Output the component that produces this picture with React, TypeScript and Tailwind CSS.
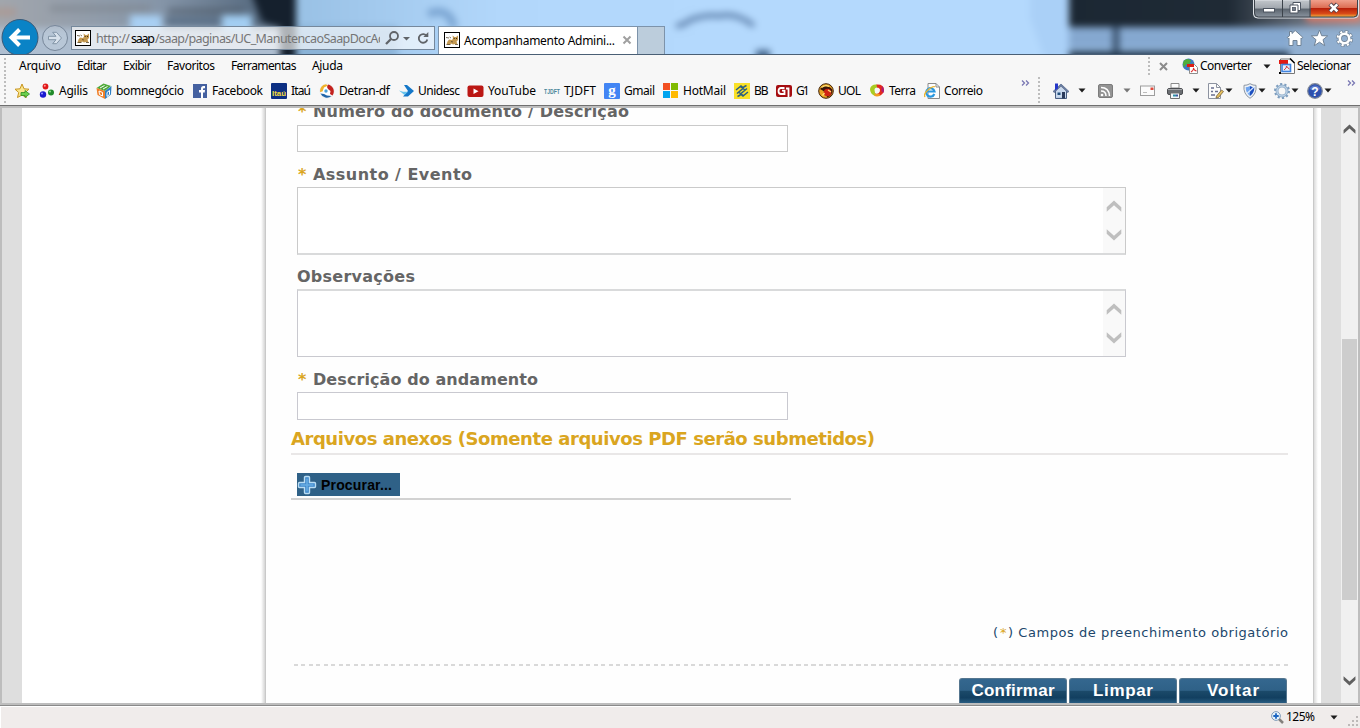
import { useLayoutEffect, useRef, useState, type ReactNode } from 'react';

const UI = "font-['Noto_Sans','Open_Sans',sans-serif]";
const VERDANA = "font-['DejaVu_Sans',Verdana,sans-serif]";

/* Text line whose tracking is adjusted so that it fills the given width. */
function Fit({ w, text, className = '' }: { w: number; text: string; className?: string }) {
  const ref = useRef<HTMLSpanElement>(null);
  const [spacing, setSpacing] = useState(0);
  useLayoutEffect(() => {
    const el = ref.current;
    if (el) setSpacing((w - el.getBoundingClientRect().width) / Math.max(1, text.length - 1));
  }, [w, text]);
  return (
    <span className={`block shrink-0 whitespace-pre ${className}`} style={{ width: w }}>
      <span ref={ref} className="inline-block" style={{ letterSpacing: spacing }}>
        {text}
      </span>
    </span>
  );
}

function Svg({ w = 16, h = 16, className = '', children }: { w?: number; h?: number; className?: string; children: ReactNode }) {
  return (
    <svg width={w} height={h} viewBox={`0 0 ${w} ${h}`} className={`block shrink-0 ${className}`}>
      {children}
    </svg>
  );
}

function Caret({ className = '', color = '#1c1c1c' }: { className?: string; color?: string }) {
  return (
    <Svg w={8} h={5} className={className}>
      <path d="M0.5 0.5h7L4 4.5z" fill={color} />
    </Svg>
  );
}

function Chevrons({ className = '' }: { className?: string }) {
  return (
    <Svg w={9} h={6} className={className}>
      <path d="M1 .5l2.500 2.500L1 5.500M5 .5l2.500 2.500L5 5.500" fill="none" stroke="#7a78b4" strokeWidth="1.300" />
    </Svg>
  );
}

function Grip({ h, className = '' }: { h: number; className?: string }) {
  return (
    <Svg w={2} h={h} className={className}>
      <path d={`M1 0V${h}`} stroke="#bdbdbd" strokeWidth="2" strokeDasharray="2 2" />
    </Svg>
  );
}

function CatIcon({ className = '' }: { className?: string }) {
  return (
    <Svg className={className}>
      <rect x=".5" y=".5" width="15" height="15" fill="#fff" stroke="#000" />
      <path d="M2.500 12.500l1-3L5 7.500l3 .5 1-1.500-.5-3L10.500 5h1.500l2-1.500v4.500l-1.500 1.500 1 3-2.500-.5-2 .5-2-1-1.500 1.500z" fill="#c59a52" />
      <path d="M2 5.500l3 .5M5.500 5l1.500 1M2.500 12.500h4M11 12.500h3M7 9.500l2 .5" stroke="#5b4a2e" strokeWidth=".8" />
      <path d="M9.700 6.500h1M12 6.500h1" stroke="#3c2c14" />
    </Svg>
  );
}

function GlassBackdrop() {
  return (
    <svg className="absolute -left-5 -top-5 max-w-none blur-[3.5px]" width="1400" height="94" viewBox="-20 -20 1400 94">
      <defs>
        <linearGradient id="gl"><stop offset="0" stopColor="#a5a8ad" /><stop offset=".6" stopColor="#8595a8" /><stop offset="1" stopColor="#4b6076" /></linearGradient>
        <linearGradient id="gd"><stop offset="0" stopColor="#1b2733" /><stop offset=".5" stopColor="#1f2a35" /><stop offset=".75" stopColor="#6c7480" /><stop offset="1" stopColor="#9aa0a8" /></linearGradient>
        <linearGradient id="gb"><stop offset="0" stopColor="#98c0e4" /><stop offset=".35" stopColor="#b2d7fb" /><stop offset=".8" stopColor="#b4d9fd" /><stop offset="1" stopColor="#b4d9fd" /></linearGradient>
      </defs>
      <rect x="-20" y="-20" width="1400" height="94" fill="#b4d9fd" />
      <rect x="290" y="-20" width="600" height="94" fill="url(#gb)" />
      <rect x="-20" y="-20" width="302" height="94" fill="url(#gl)" />
      <rect x="-20" y="8" width="36" height="8" fill="#b58f80" opacity=".5" />
      <rect x="50" y="5" width="100" height="7" fill="#7f858d" opacity=".6" />
      <rect x="168" y="8" width="75" height="6" fill="#4c5866" opacity=".6" />
      <rect x="-20" y="28" width="310" height="46" fill="#aebed0" />
      <rect x="130" y="15" width="32" height="15" fill="#a8d0f4" />
      <rect x="222" y="15" width="30" height="15" fill="#a2cef3" />
      <rect x="166" y="17" width="54" height="9" fill="#5d7289" />
      <path d="M246 -20h50v94h-16V28l-18-6z" fill="#15202d" />
      <path d="M298 26h100v48H298z" fill="#7fa6cc" opacity=".6" />
      <path d="M428 14q22-8 26 14" stroke="#7ba5d2" strokeWidth="8" fill="none" />
      <path d="M676 26q8-1 14-6q16-6 30-4q16-4 34 10" stroke="#4f719c" strokeWidth="5" fill="none" opacity=".8" />
      <rect x="756" y="50" width="14" height="20" fill="#45668c" />
      <rect x="590" y="53" width="40" height="18" fill="#6688aa" opacity=".6" />
      <path d="M1030 -20h40v94h-20L1030 18z" fill="#9cc4ee" opacity=".4" />
      <rect x="1069" y="-20" width="320" height="47" fill="url(#gd)" />
      <rect x="1069" y="27" width="320" height="22" fill="#85a8d0" />
      <rect x="1113" y="26" width="6" height="26" fill="#344b65" />
      <rect x="1069" y="51" width="220" height="20" fill="#253a50" />
      <rect x="1289" y="28" width="100" height="46" fill="#91afd0" />
      <rect x="1306" y="-10" width="56" height="32" rx="4" fill="#f07a64" opacity=".8" />
    </svg>
  );
}

function CaptionButtons() {
  return (
    <svg width="112" height="26" viewBox="0 0 112 26" className="block">
      <defs>
        <linearGradient id="cb" x2="0" y2="1"><stop offset="0" stopColor="#c2c7cc" /><stop offset=".45" stopColor="#a1a7ae" /><stop offset=".5" stopColor="#5b646e" /><stop offset="1" stopColor="#8f99a4" /></linearGradient>
        <linearGradient id="cr" x2="0" y2="1"><stop offset="0" stopColor="#f0a08c" /><stop offset=".45" stopColor="#dd6e54" /><stop offset=".5" stopColor="#b8200a" /><stop offset=".8" stopColor="#d84a18" /><stop offset="1" stopColor="#f5b440" /></linearGradient>
      </defs>
      <g transform="translate(1.500 0)">
        <path d="M4 0v14q0 4 4 4h97q4 0 4-4V0z" fill="url(#cb)" stroke="#dfe3e8" />
        <path d="M61 0h47v13q0 4-4 4H61z" fill="url(#cr)" />
        <path d="M5 0v13q0 4 4 4h95q4 0 4-4V0M33 0v17M60.500 0v17" fill="none" stroke="#3c434b" />
        <rect x="14" y="8.500" width="11" height="3.500" fill="#fff" stroke="#4d5561" />
        <path d="M43.500 2.500h7.500v8h-7.500z" fill="#fff" stroke="#4d5561" />
        <path d="M40.500 5h8v8h-8z" fill="#fff" stroke="#4d5561" />
        <rect x="43" y="7.500" width="3" height="3" fill="#747d89" stroke="#4d5561" strokeWidth=".8" />
        <path d="M80.500 4l7.500 7.500M88 4l-7.500 7.500" stroke="#53414a" strokeWidth="4.500" />
        <path d="M80.800 4.300l7 7M87.800 4.300l-7 7" stroke="#fff" strokeWidth="2.600" />
      </g>
    </svg>
  );
}

function TitleBar() {
  return (
    <header className="relative h-[54px] overflow-hidden">
      <GlassBackdrop />
      <div className="relative flex h-[54px]">
        <Svg w={71} h={54}>
          <circle cx="20" cy="37.500" r="18" fill="#0a83c6" stroke="#3a5a78" />
          <path d="M30 37.500H12M19.500 29.500l-8 8 8 8" fill="none" stroke="#fff" strokeWidth="4" />
          <circle cx="55" cy="38" r="12.500" fill="#c2cfdd" fillOpacity=".5" stroke="#77879a" />
          <path d="M48.500 36.300h7.500l-3.300-4h3.800l5 5.700-5 5.700h-3.800l3.300-4h-7.500z" fill="#d8e2ec" stroke="#7c8ea2" strokeWidth=".9" />
        </Svg>
        <div className="mt-[26px] flex h-6 w-[364px] items-center border border-[#75889c] bg-white/65 pl-[3px]">
          <CatIcon />
          <div className={`ml-[5px] flex w-[284px] overflow-hidden pt-px text-[12.5px] leading-[22px] text-[#757575] ${UI}`}>
            <Fit w={34} text="http://" />
            <Fit w={24} text="saap" className="ml-px text-black" />
            <Fit w={229} text="/saap/paginas/UC_ManutencaoSaapDocAc" />
          </div>
          <Svg w={53} h={20}>
            <g transform="translate(4 0)">
              <circle cx="10" cy="8" r="4" fill="none" stroke="#606469" strokeWidth="1.800" />
              <path d="M7 11l-5 5" stroke="#606469" strokeWidth="2.300" />
              <path d="M19 9h7l-3.500 3.500z" fill="#606469" />
              <path d="M42.800 8.200A4.300 4.300 0 1 0 43.300 11.500" fill="none" stroke="#606469" strokeWidth="1.800" />
              <path d="M44.300 4v5h-5z" fill="#606469" />
            </g>
          </Svg>
        </div>
        <div className="ml-[3px] mt-[26px] flex h-7 w-[200px] border border-b-0 border-[#7d93aa] bg-white pl-[5px] pt-[5px]">
          <CatIcon />
          <Fit w={151} text="Acompanhamento Admini..." className={`ml-1 text-xs leading-[17px] text-black ${UI}`} />
          <Svg w={10} h={16} className="ml-[7px]"><path d="M1.500 4.500l7 7M8.500 4.500l-7 7" stroke="#a0a0a0" strokeWidth="2" /></Svg>
        </div>
        <div className="mt-[26px] h-[28px] w-[27px] border border-b-0 border-l-0 border-[#7d93aa] bg-[#bccddc]" />
        <div className="ml-auto flex w-[112px] flex-col">
          <CaptionButtons />
          <Svg w={112} h={26}>
            <g transform="translate(38 2.500)" stroke="#6f8296" strokeWidth="1" fill="#fff">
              <path d="M3 9.500v7.500h4v-5h4v5h4V9.500l.8.600 1-1.300L9.200 2 6 5V3H3.500v4.300L1.200 9l1 1.100z" />
              <path d="M33.500 1.500l2.200 5.700 6 .2-4.700 3.800 1.700 6-5.200-3.500-5.200 3.500 1.700-6-4.700-3.800 6-.2z" />
              <circle cx="58.500" cy="10" r="7" fill="none" stroke="#6f8296" strokeWidth="3.200" strokeDasharray="3.500 2" />
              <circle cx="58.500" cy="10" r="4.700" fill="none" stroke="#6f8296" strokeWidth="4.200" />
              <circle cx="58.500" cy="10" r="6.900" fill="none" stroke="#fff" strokeWidth="2" strokeDasharray="2.200 3.220" strokeDashoffset="-.7" />
              <circle cx="58.500" cy="10" r="4.700" fill="none" stroke="#fff" strokeWidth="2.600" />
            </g>
          </Svg>
        </div>
      </div>
    </header>
  );
}

const StarIcon = (
  <Svg>
    <path d="M8 1l2 4.800 5 .4-3.800 3.300 1.200 5L8 12l-4.500 2.500 1.200-5L1 6.200l5-.4z" fill="#fbe68c" stroke="#c79520" />
    <path d="M7 9.500h4V7.500l4.500 3.500-4.500 3.500v-2H7z" fill="#6ccf4c" stroke="#2f8c22" strokeWidth=".8" />
  </Svg>
);
const AgilisIcon = (
  <Svg>
    <circle cx="6.500" cy="3.500" r="2.900" fill="#e01818" /><circle cx="4" cy="11.500" r="3.200" fill="#1a1ad0" /><circle cx="12" cy="9.500" r="3" fill="#208a2a" />
    <circle cx="5.800" cy="2.700" r="1" fill="#ff9a9a" /><circle cx="3" cy="10.500" r="1" fill="#9a9aff" /><circle cx="11" cy="8.500" r="1" fill="#90e090" />
  </Svg>
);
const BomIcon = (
  <Svg>
    <path d="M.5 5l7-4.500L15 3l-6 5z" fill="#4faa3a" /><path d="M.5 5L9 8v8l-7.500-4z" fill="#f0802a" /><path d="M9 8l6.500-5-.5 8.500L9 16z" fill="#2e7fc4" />
    <path d="M4 5l4.500-2.500M7 6l4.500-2.500M3 8l3.500 1.500v3.500L3.500 11.500zM11 9.500l2.500-2v4l-2.500 2z" fill="none" stroke="#fff" strokeWidth="1" />
  </Svg>
);
const FacebookIcon = (
  <Svg>
    <rect x="0" y="1" width="14" height="14" fill="#4561a0" />
    <path d="M8 15V9.500H6V7h2V5.500Q8 3 10.500 3H12v2.200h-1.200q-.8 0-.8.800v1h2l-.3 2.500H10V15z" fill="#fff" />
  </Svg>
);
const ItauIcon = (
  <Svg>
    <rect width="16" height="16" rx="1" fill="#0c2f83" />
    <text x="1" y="13" fontSize="7.500" fontWeight="bold" textLength="14" lengthAdjust="spacingAndGlyphs" fill="#f6dc3c" fontFamily="Liberation Sans">Itaú</text>
  </Svg>
);
const DetranIcon = (
  <Svg>
    <circle cx="8" cy="8" r="7" fill="#fff" stroke="#ddd" strokeWidth=".5" />
    <path d="M1 9A7 7 0 0 1 7 1.200l2 1.300-4 2-1.500 4z" fill="#f0b32a" /><path d="M9 1.500a7 7 0 0 1 4.500 11L11 11l.5-3L9 6l-1-2z" fill="#c3221e" /><path d="M1.500 10.500L5 11l3 1.500 4.500.500a7 7 0 0 1-11-2.500z" fill="#2366a8" />
    <circle cx="7" cy="8" r="1.700" fill="#4ba2d8" />
  </Svg>
);
const UnidescIcon = (
  <Svg>
    <path d="M5 2h3l7 6-6 5.500H4L9 8z" fill="#1477c8" /><path d="M0 7.500l4 1.200h5L5.500 12z" fill="#67c4ee" />
  </Svg>
);
const YoutubeIcon = (
  <Svg w={17}><rect x=".5" y="2.500" width="16" height="11.500" rx="2" fill="#bb1714" /><path d="M6.500 5.500l5 2.800-5 2.800z" fill="#fff" /></Svg>
);
const TjdftIcon = (
  <Svg w={17}><text x="0" y="11" fontSize="6.500" fontWeight="bold" textLength="16" lengthAdjust="spacingAndGlyphs" fill="#4b8799" fontFamily="Liberation Sans">TJDFT</text></Svg>
);
const GmailIcon = (
  <Svg><rect width="16" height="16" rx="1" fill="#4285f4" /><text x="8" y="11.500" fontSize="15" fontWeight="bold" textAnchor="middle" fill="#fff" fontFamily="Liberation Serif">g</text></Svg>
);
const HotmailIcon = (
  <Svg><path d="M0 0h7v7H0z" fill="#f25022" /><path d="M8 0h7v7H8z" fill="#7fba00" /><path d="M0 8h7v7H0z" fill="#00a4ef" /><path d="M8 8h7v7H8z" fill="#ffb900" /></Svg>
);
const BBIcon = (
  <Svg><rect width="16" height="16" fill="#fae128" /><path d="M2 7l5-4 2.500 2L3 10.500M14 9l-5 4-2.500-2L13 5.500M5 9.500l5 3.500M6 3.500l5 3.500M9.500 4l3-1.500M3.500 13.500l3-1.500" fill="none" stroke="#2c5f80" strokeWidth="1.500" /></Svg>
);
const G1Icon = (
  <Svg>
    <rect y="2" width="16" height="12" rx="2" fill="#a50d10" />
    <path d="M8.500 5H5Q2.500 5 2.500 8t2.500 3h3.500V7.700H6M10 5.500h2.500V14" fill="none" stroke="#fff" strokeWidth="1.800" />
  </Svg>
);
const UolIcon = (
  <Svg>
    <circle cx="8" cy="8" r="7.300" fill="#e9a526" stroke="#3e2008" />
    <path d="M2 6q3-4 7-2.500 5 .5 5.500 4.500-.5 5-5.500 6.500Q9 9 2 6z" fill="#3a1609" />
    <circle cx="9.500" cy="9.500" r="3.800" fill="#cf2414" />
    <path d="M3.500 4.500q4-3 7.500-1M4.500 12.500l2-2.500M10 7l3 2" stroke="#ffe070" strokeWidth="1.300" fill="none" />
  </Svg>
);
const TerraIcon = (
  <Svg>
    <path d="M1 6Q2 1 8 1.500L9 4.500Q5.500 4 5.500 7t2 4L6 13Q1 11 1 6z" fill="#a9cc22" /><path d="M7.500 1.500Q15 1 15 7q-1 6-7 6l-2-2q5 0 5-4 0-2-3-2.500z" fill="#e32a20" /><path d="M5.500 10q2 1.500 4.500.5l1.500 2q-3 1.500-6 .5z" fill="#f29a1f" /><path d="M13 3q3 3 1.500 7l-2-2z" fill="#a91d78" />
  </Svg>
);
const IeIcon = (
  <Svg>
    <path d="M4 .5h8l3.500 3.500v11.500H4z" fill="#fdfdfd" stroke="#8b8b8b" /><path d="M12 .5V4h3.500" fill="none" stroke="#8b8b8b" />
    <path d="M10.300 11A4.200 4.200 0 1 1 10.500 8.500H3" fill="none" stroke="#2a98e0" strokeWidth="2.200" />
    <path d="M1 14Q-1 11 5 6q5-3.500 6-2" fill="none" stroke="#efb52a" strokeWidth="1.300" />
  </Svg>
);

/* icon, slot width up to the next icon, caption offset, caption width */
const BOOKMARKS: { icon: ReactNode; slot: number; label: string; pad: number; w: number }[] = [
  { icon: AgilisIcon, slot: 57, label: 'Agilis', pad: 4, w: 29 },
  { icon: BomIcon, slot: 97, label: 'bomnegócio', pad: 4, w: 68 },
  { icon: FacebookIcon, slot: 78, label: 'Facebook', pad: 3, w: 51 },
  { icon: ItauIcon, slot: 48, label: 'Itaú', pad: 4, w: 20 },
  { icon: DetranIcon, slot: 80, label: 'Detran-df', pad: 4, w: 51 },
  { icon: UnidescIcon, slot: 68, label: 'Unidesc', pad: 3, w: 42 },
  { icon: YoutubeIcon, slot: 77, label: 'YouTube', pad: 4, w: 48 },
  { icon: TjdftIcon, slot: 60, label: 'TJDFT', pad: 3, w: 32 },
  { icon: GmailIcon, slot: 59, label: 'Gmail', pad: 4, w: 31 },
  { icon: HotmailIcon, slot: 71, label: 'HotMail', pad: 4, w: 43 },
  { icon: BBIcon, slot: 42, label: 'BB', pad: 4, w: 14.5 },
  { icon: G1Icon, slot: 42, label: 'G1', pad: 4, w: 13.5 },
  { icon: UolIcon, slot: 51, label: 'UOL', pad: 4, w: 23 },
  { icon: TerraIcon, slot: 55, label: 'Terra', pad: 4, w: 27 },
  { icon: IeIcon, slot: 97, label: 'Correio', pad: 4, w: 39 },
];

const MENUS: [string, number, number][] = [
  ['Arquivo', 42, 58],
  ['Editar', 30, 46],
  ['Exibir', 28.5, 44],
  ['Favoritos', 48, 64],
  ['Ferramentas', 65.5, 81],
  ['Ajuda', 31, 47],
];

function Toolbars() {
  return (
    <div className={`flex h-[51px] flex-col border-t border-[#4a5f75] bg-[#f7f7f7] text-xs leading-4 text-black ${UI}`}>
      <div className="flex h-[22px] items-center">
        <Grip h={19} className="ml-1 mr-[13px] self-end" />
        {MENUS.map(([name, w, slot]) => (
          <div key={name} className="shrink-0" style={{ width: slot }}>
            <Fit w={w} text={name} />
          </div>
        ))}
        <div className="ml-auto flex h-[22px] w-[212px] items-center">
          <Grip h={18} />
          <Svg w={10} h={9} className="ml-[9px]"><path d="M1 1l7 7M8 1L1 8" stroke="#8b8b8b" strokeWidth="2" /></Svg>
          <Svg className="ml-[13px]">
            <circle cx="6.500" cy="6.500" r="6" fill="#3f78c4" /><path d="M2 2.500q4-3 7 0l-1 3-4 1-2 3Q0 6 2 2.500zM8 7l3-2 1 3-3 1z" fill="#4fae3c" />
            <path d="M7.500 6.500h5l3 3v6h-8z" fill="#fff" stroke="#8d8d8d" /><path d="M5 6h7v3H5z" fill="#dc1c14" /><path d="M9 14q3-2 2.500-4 0 2 3 3" fill="none" stroke="#dc3030" strokeWidth="1.100" />
          </Svg>
          <Fit w={52} text="Converter" className="ml-[2px]" />
          <Caret className="ml-[11px]" />
          <Svg className="ml-[8px]">
            <path d="M1.500 1h10l4 4v10.500h-14z" fill="#fff" stroke="#777" /><path d="M11 .5l4.500 4.500" stroke="#000" strokeWidth="1.500" /><path d="M0 2h9v4H0z" fill="#e21b14" />
            <rect x="3" y="6.500" width="8.500" height="7" fill="#e8f0fc" stroke="#3f83df" strokeWidth="1.600" /><path d="M5 12q3-2 2.500-4 1 2 3 3" fill="none" stroke="#d43a3a" />
            <path d="M0 14h2v2H0z" />
          </Svg>
          <Fit w={54} text="Selecionar" className="ml-[2px]" />
        </div>
      </div>
      <div className="flex h-[27px] items-center">
        <Grip h={26} className="ml-1 mr-[8px] self-start" />
        <div className="w-[25px]">{StarIcon}</div>
        {BOOKMARKS.map((b) => (
          <div key={b.label} className="flex shrink-0 items-center" style={{ width: b.slot, gap: b.pad }}>
            {b.icon}
            <Fit w={b.w} text={b.label} />
          </div>
        ))}
        <Chevrons className="-mt-4" />
        <Grip h={26} className="ml-[8px] self-start" />
        <Svg className="ml-[13px]">
          <path d="M2.500 8v7.500h11V8" fill="#b9cbe2" stroke="#4a5e82" /><path d="M0 8.500L8 1l8 7.500-1.500 1L8 3.500l-6.500 6z" fill="#6a7da0" stroke="#51648a" strokeWidth=".7" /><path d="M2 .5h3v5l-3 2z" fill="#2537c9" />
          <path d="M8 4l5 4.500V14H3V8.500z" fill="#c9d9ee" /><rect x="4.500" y="9.500" width="3" height="2.500" fill="#24507c" /><rect x="9" y="9" width="3" height="6.500" fill="#2a3a5a" />
        </Svg>
        <Caret className="ml-[9px]" />
        <Svg w={15} className="ml-[12px]">
          <rect x=".5" y="1.500" width="14" height="13" rx="1.500" fill="#939393" stroke="#7c7c7c" /><path d="M3 4.500q8 0 8.500 8.500M3 8q5 0 5 5" fill="none" stroke="#fff" strokeWidth="1.500" /><circle cx="4" cy="12" r="1.300" fill="#fff" />
        </Svg>
        <Caret className="ml-[10px]" color="#777" />
        <Svg w={15} className="ml-[9px]"><rect x=".5" y="3" width="14" height="9.500" fill="#fbfbfb" stroke="#9d9d9d" /><path d="M10.500 4.500h3V7h-3z" fill="#e0483a" /><path d="M3 9.500h4" stroke="#bbb" /></Svg>
        <Svg className="ml-[12px]">
          <path d="M4 .5h8V5H4z" fill="#fdfdfd" stroke="#8b8b8b" /><rect x=".5" y="5.500" width="15" height="6" rx="1.500" fill="#6b6e72" stroke="#4c4e52" /><path d="M1 6.500h14" stroke="#a7a9ac" /><path d="M3.500 10h9v5.500h-9z" fill="#f3f8fb" stroke="#707070" /><path d="M6 12.500h3" stroke="#308fa6" strokeWidth="2" /><path d="M9 12.500h2" stroke="#4057a2" strokeWidth="2" />
        </Svg>
        <Caret className="ml-[9px]" />
        <Svg className="ml-[8px]">
          <path d="M.5.500h8l4 4v11H.500z" fill="#fbfbfb" stroke="#8d93a0" /><path d="M8.500.5v4h4" fill="none" stroke="#8d93a0" /><path d="M3 5h3M3 8.500h2M7 8.500h3M3 12h4" stroke="#6a6f90" strokeWidth="1.300" /><path d="M8.500 13l5-6 2 1.500-5 6-2.500.5z" fill="#e4c05e" stroke="#77603a" strokeWidth=".8" />
        </Svg>
        <Caret className="ml-[1px]" />
        <Svg w={14} className="ml-[10px]">
          <path d="M7 .7q3 1.800 6 1.600Q14 11 7 15.300Q0 11 1 2.300 4 2.500 7 .7z" fill="#eef2f7" stroke="#8c96a3" /><path d="M7 3q2.500 1.200 4.300 1.200Q11.500 10 7 13z" fill="#1d50c0" /><path d="M7 3Q4.500 4.200 2.700 4.200 2.700 10 7 13z" fill="#6fa5f0" /><path d="M11 4L4 10.500" stroke="#d4e5fc" strokeWidth="1.300" />
        </Svg>
        <Caret className="ml-[1px]" />
        <Svg className="ml-[8px]">
          <circle cx="8" cy="8" r="5" fill="none" stroke="#94b0cc" strokeWidth="3" /><circle cx="8" cy="8" r="7" fill="none" stroke="#7d9dbe" strokeWidth="2" strokeDasharray="2.200 2.200" /><circle cx="8" cy="8" r="5" fill="none" stroke="#c6dbee" />
        </Svg>
        <Caret className="ml-[1px]" />
        <Svg className="ml-[8px]">
          <circle cx="8" cy="8" r="7.300" fill="#2c4fae" stroke="#7f8899" strokeWidth="1.200" /><path d="M2.500 6a6 6 0 0 1 11 0q-5 3-11 0z" fill="#7896dc" opacity=".6" />
          <text x="8" y="12.500" fontSize="12" fontWeight="bold" textAnchor="middle" fill="#fff" fontFamily="Liberation Sans">?</text>
        </Svg>
        <Caret className="ml-[1px]" />
        <Chevrons className="-mt-4 ml-[15px]" />
      </div>
    </div>
  );
}

function FieldLabel({ text, w, required = false, className }: { text: string; w: number; required?: boolean; className: string }) {
  return (
    <div className={`flex text-base font-bold leading-[18px] text-[#656565] ${className} ${VERDANA}`}>
      {required && <span className="w-4 shrink-0 pl-px text-[#daa520]">*</span>}
      <Fit w={w} text={text} />
    </div>
  );
}

function Arrow({ up = false, className = '', color }: { up?: boolean; className?: string; color: string }) {
  return (
    <Svg w={16} h={12} className={className}>
      <path d={up ? 'M.7 7.300L8 .5l7.300 6.800V11.800L8 5.300.7 11.800z' : 'M.7 4.700L8 11.500l7.300-6.800V.2L8 6.700.7.200z'} fill={color} />
    </Svg>
  );
}

function TextArea({ className }: { className: string }) {
  return (
    <div className={`flex w-[829px] shrink-0 justify-end border bg-white ${className}`}>
      <div className="flex w-[22px] flex-col items-center bg-[#f9f9f9] pt-[12px]">
        <Arrow up color="#bfbfbf" />
        <Arrow className="mt-[17px]" color="#bfbfbf" />
      </div>
    </div>
  );
}

function ActionButton({ label, w }: { label: string; w: number }) {
  return (
    <button className="flex h-[26px] w-[108px] justify-center rounded-t-[3px] border border-b-0 border-[#55768f] bg-[linear-gradient(#34678f_0,#2f6187_45%,#1b4969_50%,#123f60_75%,#2d6288_100%)] pt-[2px] font-['Liberation_Sans',sans-serif] text-[17px] font-bold leading-5 text-white">
      <Fit w={w} text={label} />
    </button>
  );
}

function FormColumn() {
  return (
    <main className="flex w-[1049px] shrink-0 flex-col border-x border-[#c9c9c9] bg-[#fefefe] pl-[25px] pr-[25px]">
      <div className="flex shrink-0 flex-col pl-[6px]">
        <FieldLabel required text="Número do documento / Descrição" w={316} className="-mt-[5px] h-[22px]" />
        <div className="h-[27px] w-[491px] border border-[#cacaca] bg-white" />
        <FieldLabel required text="Assunto / Evento" w={159} className="h-[35px] pt-[14px]" />
        <TextArea className="h-[68px] border-[#cacaca] border-b-2 border-b-[#d9dadb]" />
        <FieldLabel text="Observações" w={118} className="h-[34px] pt-[13px]" />
        <TextArea className="h-[68px] border-[#c9c9cf] border-t-2 border-t-[#d9dadb]" />
        <FieldLabel required text="Descrição do andamento" w={225} className="h-[35px] pt-[14px]" />
        <div className="h-7 w-[491px] border border-[#c9c9d0] bg-white" />
      </div>
      <h2 className={`h-[35px] shrink-0 border-b-2 border-[#e9e7e7] pt-[7px] text-[18px] font-bold leading-6 text-[#daa520] ${VERDANA}`}>
        <Fit w={584} text="Arquivos anexos (Somente arquivos PDF serão submetidos)" />
      </h2>
      <div className="mt-[18px] w-[500px] shrink-0 border-b-2 border-[#d2d2d2] pb-[2px] pl-[6px]">
        <button className="flex h-[23px] w-[103px] items-center bg-[#2f6187]">
          <Svg w={20} h={20}>
            <path d="M7.500 2.500q0-1 1-1h3q1 0 1 1v5h5q1 0 1 1v3q0 1-1 1h-5v5q0 1-1 1h-3q-1 0-1-1v-5h-5q-1 0-1-1v-3q0-1 1-1h5z" fill="#3d86c8" stroke="#b9dcf2" strokeWidth="1.400" />
            <path d="M10 3.500v13M3.500 10h13" stroke="#69aee4" strokeWidth="1.500" />
          </Svg>
          <Fit w={71} text="Procurar..." className="ml-1 text-left font-['Liberation_Sans',sans-serif] text-[14px] font-bold leading-5 text-black" />
        </button>
      </div>
      <div className={`mt-[123px] flex shrink-0 justify-end text-[13px] leading-5 text-[#20466b] ${VERDANA}`}>
        <Fit w={7} text="(" />
        <span className="w-2 text-[#daa520]">*</span>
        <Fit w={280} text=") Campos de preenchimento obrigatório" />
      </div>
      <div className="ml-[3px] mt-[21px] h-[2px] shrink-0 bg-[repeating-linear-gradient(90deg,#d9d9d9_0_4px,transparent_4px_7.500px)]" />
      <div className="mr-px mt-[12px] flex shrink-0 justify-end gap-[2px]">
        <ActionButton label="Confirmar" w={83} />
        <ActionButton label="Limpar" w={60} />
        <ActionButton label="Voltar" w={52} />
      </div>
    </main>
  );
}

function Viewport() {
  return (
    <div className="h-[601px] border-y border-b-[#8a8a8a] border-t-[#707070]">
      <div className="flex h-[599px] overflow-hidden border-2 border-[#bdbdbd] bg-white">
        <div className="w-5 shrink-0 bg-[#dedede]" />
        <div className="w-[239px] shrink-0 bg-white" />
        <div className="w-1 shrink-0 bg-linear-to-r from-white to-[#d5d5d5]" />
        <FormColumn />
        <div className="w-1 shrink-0 bg-linear-to-r from-[#dcdcdc] to-white" />
        <div className="w-[3px] shrink-0 bg-white" />
        <div className="w-5 shrink-0 bg-[#dedede]" />
        <div className="flex grow flex-col items-center bg-[#f0f0f0] pt-[16px]">
          <Arrow up color="#606060" className="h-[10px] w-[13px]" />
          <div className="mt-[205px] h-[261px] w-[15px] shrink-0 bg-[#cdcdcd]" />
          <Arrow color="#606060" className="mt-[76px] h-[10px] w-[13px]" />
        </div>
      </div>
    </div>
  );
}

function StatusBar() {
  return (
    <footer className={`flex h-[22px] items-center border-l border-t border-white bg-[#f0eceb] pb-px text-xs leading-4 text-black ${UI}`}>
      <Svg w={13} h={13} className="ml-[1270px]">
        <path d="M8 8l4 4" stroke="#84807c" strokeWidth="2.500" /><circle cx="5" cy="5" r="4.400" fill="#e6f2fb" stroke="#809cb8" /><path d="M5 2.300v5.400M2.300 5h5.400" stroke="#1c66c2" strokeWidth="1.800" />
      </Svg>
      <Fit w={29} text="125%" className="ml-[2px]" />
      <Caret className="ml-[15px]" />
      <Svg w={12} h={12} className="ml-auto mt-[8px]">
        <path d="M8 1h2v2H8zM8 5h2v2H8zM8 9h2v2H8zM4 5h2v2H4zM4 9h2v2H4zM0 9h2v2H0z" fill="#bdb9b8" />
      </Svg>
    </footer>
  );
}

export default function App() {
  return (
    <div className="flex h-[728px] w-[1360px] flex-col overflow-hidden bg-white">
      <TitleBar />
      <Toolbars />
      <Viewport />
      <StatusBar />
    </div>
  );
}
